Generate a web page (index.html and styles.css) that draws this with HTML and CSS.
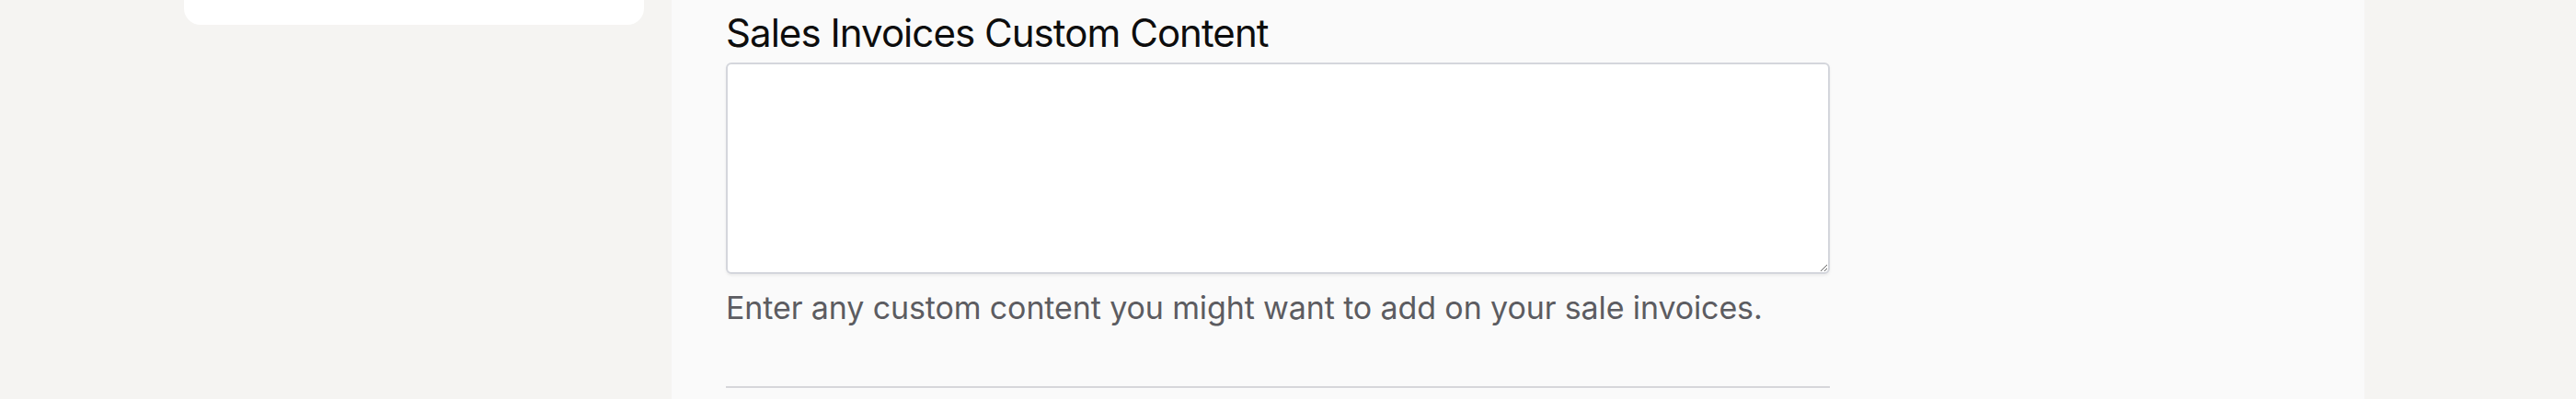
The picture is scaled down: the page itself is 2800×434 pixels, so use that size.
FILE: index.html
```html
<!DOCTYPE html>
<html lang="en">
<head>
<meta charset="utf-8">
<title>Sales Invoices Custom Content</title>
<link rel="stylesheet" href="styles.css">
</head>
<body>
<div class="layout">
  <aside class="sidebar">
    <div class="side-card"></div>
  </aside>
  <main class="panel">
    <div class="field">
      <label class="field-label" for="custom">Sales Invoices Custom Content</label>
      <textarea id="custom" class="field-input"></textarea>
      <p class="field-help">Enter any custom content you might want to add on your sale invoices.</p>
      <hr class="divider">
    </div>
  </main>
</div>
</body>
</html>
```

FILE: styles.css
```css
html, body {
  margin: 0;
  padding: 0;
  height: 100%;
}
body {
  background: #f5f4f2;
  font-family: Inter, "Noto Sans", "Liberation Sans", sans-serif;
  overflow: hidden;
}
.layout {
  display: flex;
  align-items: stretch;
  height: 434px;
  padding-left: 200px;
  gap: 30px;
}
.sidebar {
  width: 500px;
  flex: none;
}
.side-card {
  height: 27px;
  background: #ffffff;
  border-radius: 0 0 18px 18px;
}
.panel {
  width: 1840px;
  flex: none;
  background: #fafafa;
  padding-left: 59px;
  box-sizing: border-box;
}
.field {
  width: 1200px;
  display: flex;
  flex-direction: column;
  padding-top: 8px;
}
.field-label {
  font-size: 42px;
  line-height: 56px;
  letter-spacing: -0.95px;
  color: #0d0d0d;
  margin-bottom: 4px;
}
.field-input {
  display: block;
  box-sizing: border-box;
  width: 1200px;
  height: 230px;
  border: 2px solid #d4d6dc;
  border-radius: 6px;
  background: #ffffff;
  box-shadow: 0 2px 3px rgba(0, 0, 0, 0.06);
  margin: 0;
  font: inherit;
}
.field-help {
  margin: 13px 0 0;
  font-size: 34px;
  line-height: 48px;
  letter-spacing: -0.12px;
  color: #5c5c61;
}
.divider {
  margin: 61px 0 0;
  border: 0;
  height: 2px;
  background: #d6d6da;
}
```
